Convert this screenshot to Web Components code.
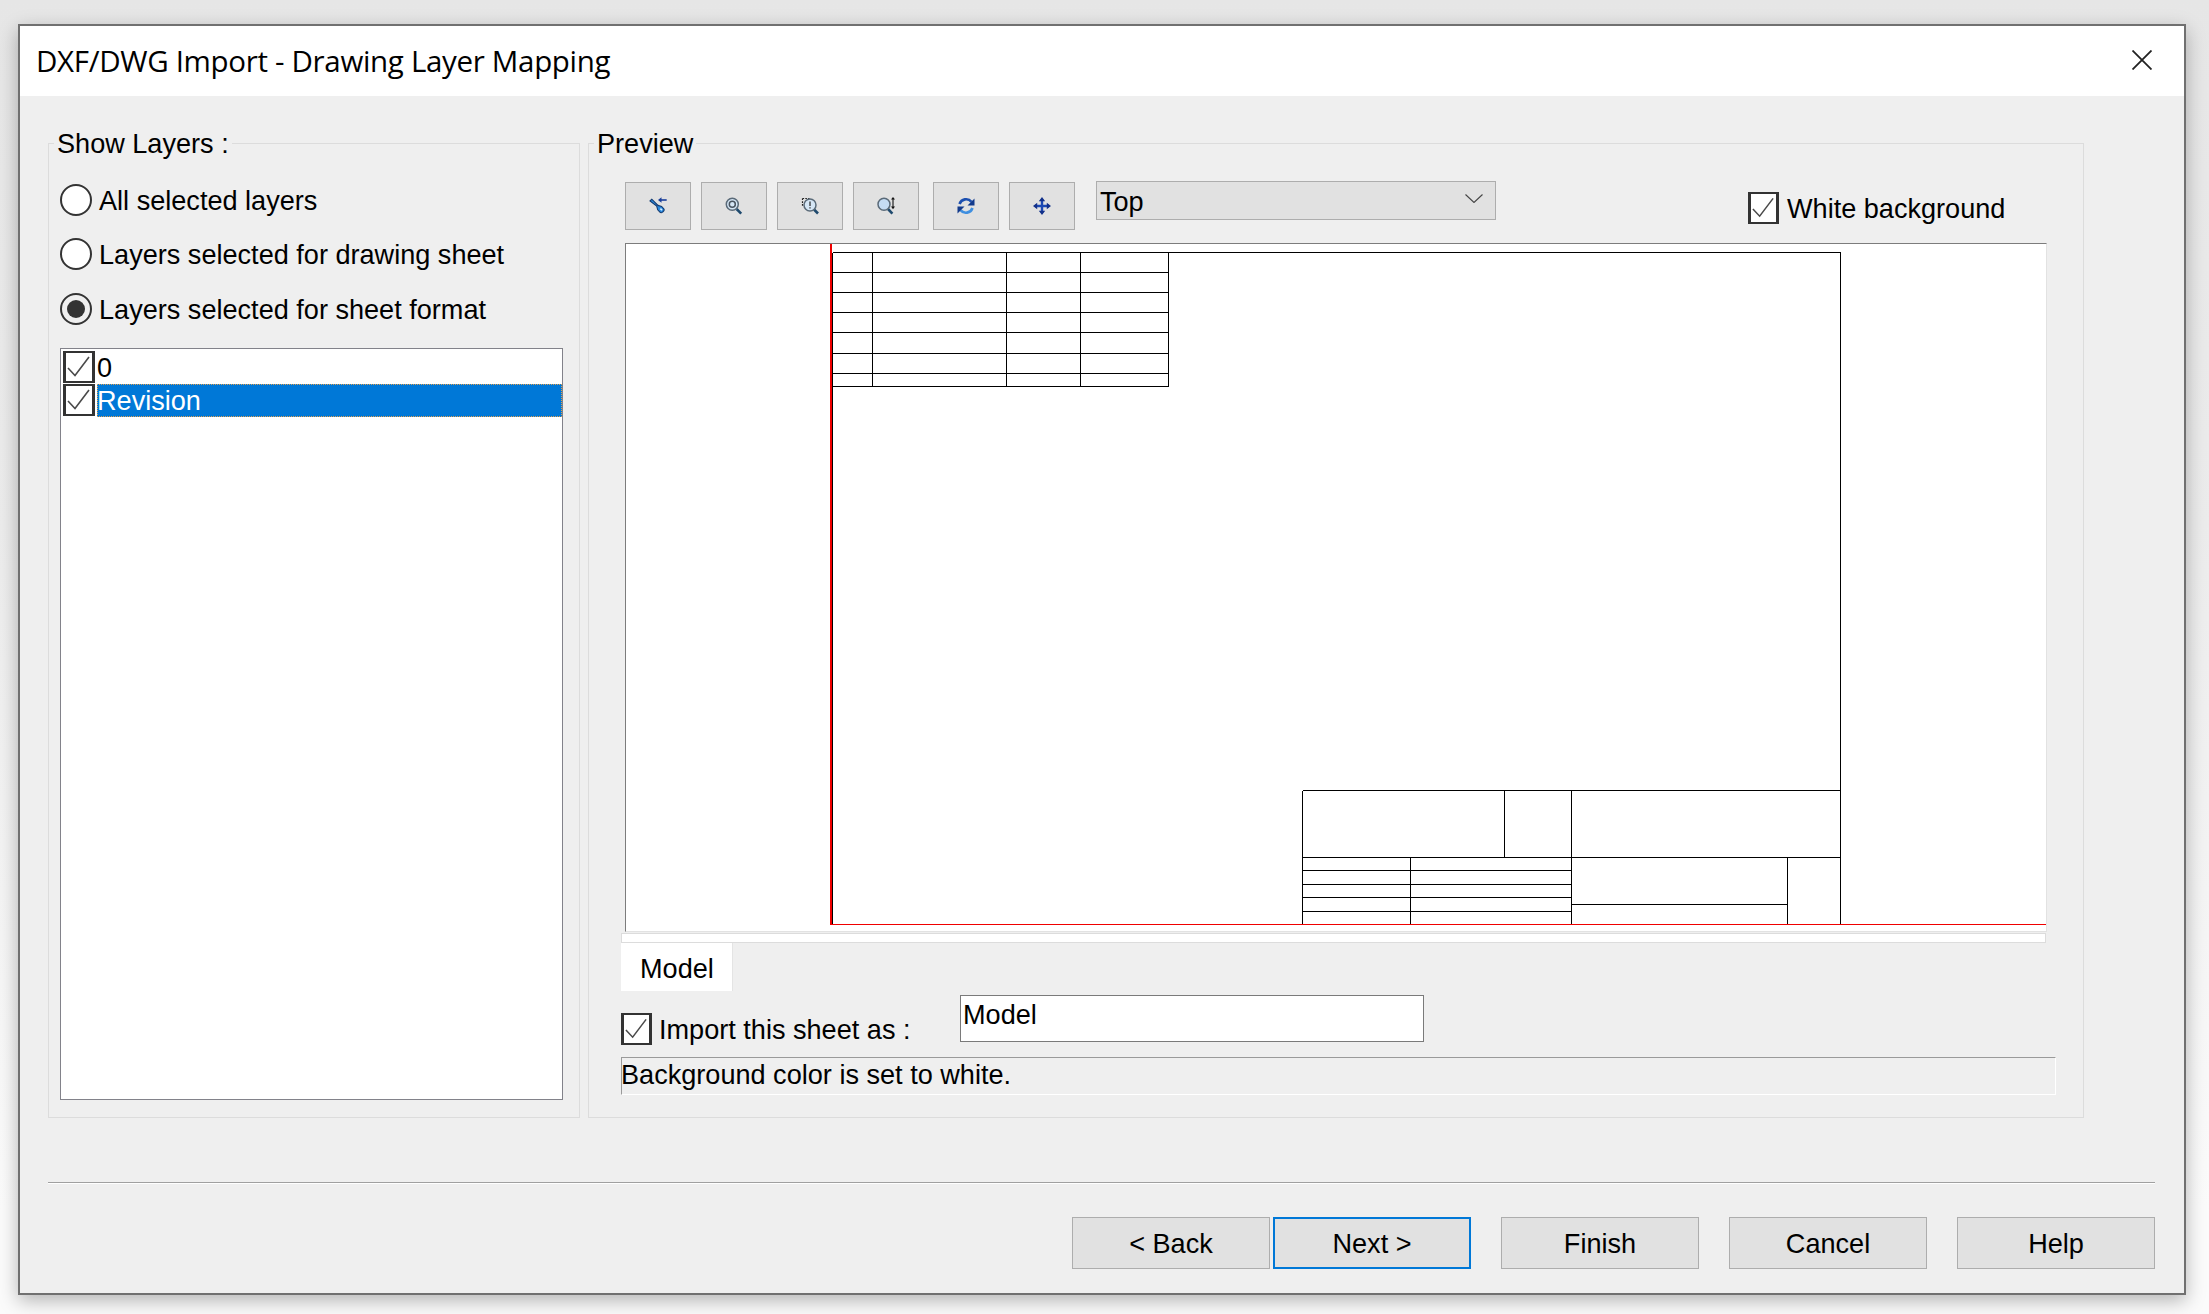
<!doctype html>
<html>
<head>
<meta charset="utf-8">
<title>DXF/DWG Import</title>
<style>
  html, body { margin: 0; height: 100%; }
  body { background: linear-gradient(#e6e6e6, #ececec 40%, #fbfbfb 92%); font: 27.1px/30px "Liberation Sans", Arial, sans-serif; color: #000; overflow: hidden; }
</style>
</head>
<body>
<dlg-window>
  <dlg-titlebar slot="title">DXF/DWG Import - Drawing Layer Mapping</dlg-titlebar>

  <dlg-group style="width:532px" legend="Show Layers :">
    <div style="padding:25px 0 0 10px;display:flex;flex-direction:column">
      <dlg-radio>All selected layers</dlg-radio>
      <dlg-radio style="margin-top:22px">Layers selected for drawing sheet</dlg-radio>
      <dlg-radio style="margin-top:23px" checked>Layers selected for sheet format</dlg-radio>
      <dlg-listbox style="margin-top:23px">
        <dlg-layer>0</dlg-layer>
        <dlg-layer selected>Revision</dlg-layer>
      </dlg-listbox>
    </div>
  </dlg-group>

  <dlg-group style="width:1496px" legend="Preview">
    <div style="padding:22px 0 0 31px">
      <div style="display:flex;align-items:flex-start;height:62px;margin-left:4px">
        <dlg-tool style="margin-top:1px" icon="back"></dlg-tool>
        <dlg-tool style="margin:1px 0 0 10px" icon="zoom"></dlg-tool>
        <dlg-tool style="margin:1px 0 0 10px" icon="area"></dlg-tool>
        <dlg-tool style="margin:1px 0 0 10px" icon="updown"></dlg-tool>
        <dlg-tool style="margin:1px 0 0 14px" icon="rotate"></dlg-tool>
        <dlg-tool style="margin:1px 0 0 10px" icon="move"></dlg-tool>
        <dlg-combo style="margin-left:21px">Top</dlg-combo>
        <dlg-check style="margin:11px 0 0 252px;gap:8px">White background</dlg-check>
      </div>
      <dlg-drawing style="margin-left:4px"></dlg-drawing>
      <dlg-tabs>Model</dlg-tabs>
      <div style="display:flex;align-items:flex-start;margin-top:4px;height:47px">
        <dlg-check style="margin-top:18px;width:339px">Import this sheet as :</dlg-check>
        <dlg-input>Model</dlg-input>
      </div>
      <dlg-status style="margin-top:15px">Background color is set to white.</dlg-status>
    </div>
  </dlg-group>

  <dlg-button slot="buttons">&lt; Back</dlg-button>
  <dlg-button slot="buttons" default style="margin-left:3px">Next &gt;</dlg-button>
  <dlg-button slot="buttons" style="margin-left:30px">Finish</dlg-button>
  <dlg-button slot="buttons" style="margin-left:30px">Cancel</dlg-button>
  <dlg-button slot="buttons" style="margin-left:30px">Help</dlg-button>
</dlg-window>

<script>
// small helper: every element gets an open shadow root from a css + html pair
function define(tag, css, html, setup) {
    customElements.define(tag, class extends HTMLElement {
        constructor() {
            super();
            this.attachShadow({mode: 'open'});
        }
        connectedCallback() {
            this.shadowRoot.innerHTML = `<style>${css}</style>` + (typeof html == 'function' ? html(this) : html);
            if (setup) setup(this);
        }
    });
}

const tick = `<svg viewBox="0 0 26 26" width="100%" height="100%"><path d="M2 14l7 7.500L23 3" fill="none" stroke="#4a4a4a" stroke-width="1.6"/></svg>`;

define('dlg-window', `
    :host { display: flex; flex-direction: column; box-sizing: border-box; width: 2168px; height: 1271px;
            margin: 24px 0 0 18px; background: #efefef; border: 2px solid #707070;
            box-shadow: 0 6px 18px rgba(0,0,0,.28); }
    .body { display: flex; gap: 8px; padding: 47px 0 0 28px; }
    hr { margin: 64px 29px 0 28px; height: 1px; border: 0; border-bottom: 1px solid #fff; background: #a0a0a0; box-sizing: content-box; }
    .buttons { display: flex; justify-content: flex-end; padding: 33px 29px 0 0; }`,
    `<slot name="title"></slot><div class="body"><slot></slot></div><hr><div class="buttons"><slot name="buttons"></slot></div>`);

define('dlg-titlebar', `
    :host { display: flex; align-items: center; justify-content: space-between; height: 70px; background: #fff;
            padding: 0 32px 0 16px; font: 29.500px/40px "Open Sans", sans-serif; letter-spacing: -.32px; }
    svg { width: 20px; height: 20px; margin-top: -2px; }`,
    `<span><slot></slot></span><svg viewBox="0 0 20 20"><path d="M.5.5l19 19M19.500 .5l-19 19" stroke="#222" stroke-width="1.8" fill="none"/></svg>`);

define('dlg-group', `
    :host { display: block; box-sizing: border-box; height: 975px; border: 1px solid #dcdcdc; padding: 1px; }
    .legend { display: block; width: fit-content; height: 30px; margin: -16px 0 0 4px; padding: 0 3px; background: #efefef; }`,
    el => `<span class="legend">${el.getAttribute('legend')}</span><slot></slot>`);

define('dlg-radio', `
    :host { display: flex; align-items: center; gap: 7px; height: 32px; }
    i { box-sizing: border-box; width: 32px; height: 32px; border: 2px solid #333; border-radius: 50%; background: #fff;
        display: flex; align-items: center; justify-content: center; }
    :host([checked]) i { background: #efefef; }
    :host([checked]) i::after { content: ""; width: 18px; height: 18px; border-radius: 50%; background: #333; }
    span { padding-top: 2px; }`,
    `<i></i><span><slot></slot></span>`);

define('dlg-listbox', `
    :host { display: block; box-sizing: border-box; width: 503px; height: 752px; background: #fff;
            border: 1px solid #82828a; padding: 2px 0 0 2px; }`,
    `<slot></slot>`);

define('dlg-layer', `
    :host { display: flex; height: 33px; }
    .box { box-sizing: border-box; flex: none; width: 32px; height: 32px; border: solid #333; border-width: 2px 3px; background: #fff; }
    .text { flex: 1; margin-left: 2px; height: 33px; line-height: 34px; box-sizing: border-box; }
    :host([selected]) .text { background: #0078d7; color: #fff; outline: 1px dotted #e0a050; outline-offset: -1px; }`,
    `<span class="box">${tick}</span><span class="text"><slot></slot></span>`);

const icons = {
    back: `<path d="M20.7 6h-7" stroke="#1a3e9a" stroke-width="1.6"/><path d="M15.500 3.200L12 6l3.500 2.800z" fill="#1a3e9a"/>
           <path d="M4 7l1.800-1.800 6.200 6.200 3.600 1 2.200 2.400c.8 1-.1 2.400-.9 3.100-.9.8-2.200 1.200-3 .2l-2.200-2.300-1-3.700z" fill="#2a8ae0" stroke="#123a70" stroke-width="1.1"/>
           <path d="M14.400 14.600l1.600 1.600" stroke="#d8f0ff" stroke-width="1.6"/>`,
    zoom: `<path d="M14.600 15l4.600 4.600" stroke="#1f4a6e" stroke-width="2.600"/>
           <circle cx="10.300" cy="10.300" r="6" fill="#d5e6f5" stroke="#5a6a78" stroke-width="1.500"/>
           <circle cx="10.300" cy="10.300" r="3" fill="none" stroke="#4a5560" stroke-width="1.500"/>`,
    area: `<path d="M4.500 4.500h7M4.500 4.500v8.500" stroke="#222" stroke-width="1.200" stroke-dasharray="1.600 1.200" fill="none"/>
           <path d="M16 15.500l4 4" stroke="#1f4a6e" stroke-width="2.600"/>
           <circle cx="12" cy="11" r="6" fill="#d5e6f5" stroke="#5a6a78" stroke-width="1.500"/>
           <path d="M12 7.500v4.500" stroke="#333" stroke-width="1.300"/><path d="M12 13.200v1.200" stroke="#333" stroke-width="1.300"/>`,
    updown: `<path d="M14 15l4.400 4.600" stroke="#1f4a6e" stroke-width="2.600"/>
           <circle cx="10" cy="10.300" r="6" fill="#c4dcf4" stroke="#5a6a78" stroke-width="1.500"/>
           <path d="M19 5v8" stroke="#111" stroke-width="1.100"/><path d="M17 5.600L19 3l2 2.600zM17 12.600L19 15.200l2-2.600z" fill="#111"/>`,
    rotate: `<path d="M5.500 10a7 7 0 0 1 12-2.200" fill="none" stroke="#1b4fb0" stroke-width="2.600"/><path d="M20.500 4.500v7h-7z" fill="#123a8c"/>
           <path d="M18.500 14a7 7 0 0 1-12 2.200" fill="none" stroke="#3f8fe0" stroke-width="2.600"/><path d="M3.500 19.500v-7h7z" fill="#123a8c"/>`,
    move: `<path d="M12 5v14M5 12h14" stroke="#1c49b4" stroke-width="2.400"/>
           <path d="M12 3L8.800 7.200h6.400zM12 21l-3.200-4.200h6.400zM3 12l4.200-3.200v6.400zM21 12l-4.200-3.200v6.400z" fill="#12308a"/>`
};

define('dlg-tool', `
    :host { display: flex; align-items: center; justify-content: center; box-sizing: border-box; width: 66px; height: 48px;
            background: #e1e1e1; border: 1px solid #adadad; }
    svg { width: 24px; height: 24px; }`,
    el => `<svg viewBox="0 0 24 24">${icons[el.getAttribute('icon')]}</svg>`);

define('dlg-combo', `
    :host { display: flex; align-items: center; justify-content: space-between; box-sizing: border-box; width: 400px; height: 39px;
            background: #e1e1e1; border: 1px solid #adadad; padding: 2px 12px 0 3px; }
    svg { width: 18px; height: 9px; margin-top: -7px; }`,
    `<span><slot></slot></span><svg viewBox="0 0 18 9"><path d="M.5.5L9 8.500 17.500 .5" fill="none" stroke="#444" stroke-width="1.100"/></svg>`);

define('dlg-check', `
    :host { display: flex; align-items: center; gap: 7px; height: 32px; }
    .box { box-sizing: border-box; flex: none; width: 31px; height: 32px; border: solid #333; border-width: 2px 3px; background: #fff; }
    span:last-child { padding-top: 2px; }`,
    `<span class="box">${tick}</span><span><slot></slot></span>`);

// the sheet in the preview, coordinates are its own place on the canvas
function sheetLines() {
    const lines = [
        [206.5,8.5,1214.5,8.5], [1214.5,8.5,1214.5,681], [206.5,8.5,206.5,681],
        // revision table top left
        [206.5,28.5,542.5,28.5],[206.5,48.5,542.5,48.5],[206.5,68.5,542.5,68.5],[206.5,88.5,542.5,88.5],
        [206.5,109.5,542.5,109.5],[206.5,129.5,542.5,129.5],[206.5,142.5,542.5,142.5],
        [246.5,8.5,246.5,142.5],[380.5,8.5,380.5,142.5],[454.5,8.5,454.5,142.5],[542.5,8.5,542.5,142.5],
        // title block
        [676.5,546.5,1214.5,546.5],[676.5,546.5,676.5,681],[945.5,546.5,945.5,681],[676.5,613.5,1214.5,613.5],
        [878.5,546.5,878.5,613.5],[1161.5,613.5,1161.5,681],
        [784.5,613.5,784.5,681],[676.5,626.5,945.5,626.5],[676.5,640.5,945.5,640.5],[676.5,653.5,945.5,653.5],[676.5,667.5,945.5,667.5],
        [945.5,660.5,1161.5,660.5]
    ];
    const row = (l, c, w) => l.map(([a,b,x,y]) => `<line x1="${a}" y1="${b}" x2="${x}" y2="${y}" stroke="${c}" stroke-width="${w}"/>`).join('');
    return row(lines, '#000', 1) + row([[205,0,205,681]], '#f00000', 2) + row([[205,680.5,1420,680.5]], '#f00000', 1);
}

define('dlg-drawing', `
    :host { display: block; box-sizing: border-box; width: 1422px; height: 689px; background: #fff;
            border: 1px solid #7c7c7c; border-right-color: #e2e2e2; border-bottom-color: #e2e2e2; }
    svg { display: block; width: 1420px; height: 687px; }`,
    `<svg viewBox="0 0 1420 687" shape-rendering="crispEdges">${sheetLines()}</svg>`);

define('dlg-tabs', `
    :host { display: block; }
    .bar { box-sizing: border-box; height: 10px; width: 1425px; margin-top: 1px; background: #fff; border: 1px solid #dcdcdc; }
    .tab { box-sizing: border-box; width: 112px; height: 48px; background: #fff; padding: 11px 0 0 19px; border-right: 1px solid #e4e4e4; }`,
    `<div class="bar"></div><div class="tab"><slot></slot></div>`);

define('dlg-input', `
    :host { display: block; box-sizing: border-box; width: 464px; height: 47px; background: #fff; border: 1px solid #7a7a7a; padding: 4px 0 0 2px; }`,
    `<slot></slot>`);

define('dlg-status', `
    :host { display: block; box-sizing: border-box; width: 1435px; height: 38px; border: 1px solid #fff; border-top-color: #9a9a9a; border-left-color: #9a9a9a; padding-top: 2px; text-indent: -1px; }`,
    `<slot></slot>`);

define('dlg-button', `
    :host { display: flex; align-items: center; justify-content: center; box-sizing: border-box; width: 198px; height: 52px;
            background: #e1e1e1; border: 1px solid #adadad; padding-top: 2px; }
    :host([default]) { border: 2px solid #0078d7; }`,
    `<slot></slot>`);
</script>
</body>
</html>
